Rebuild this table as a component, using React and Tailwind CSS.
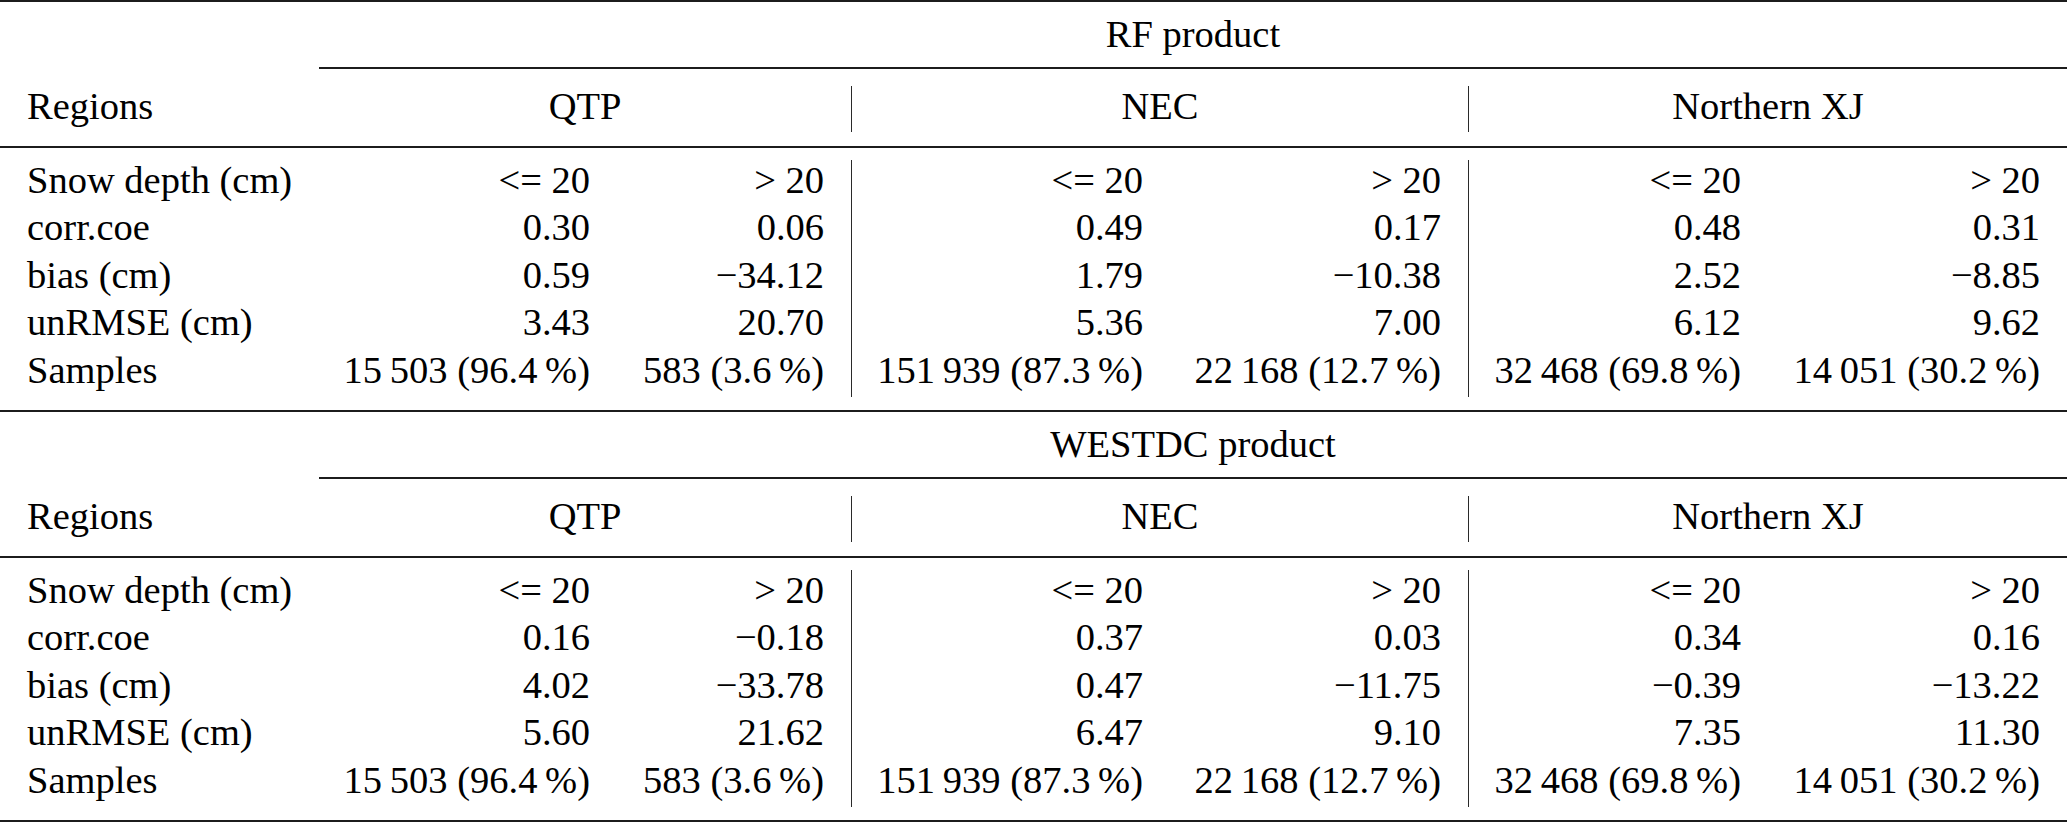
import React from "react";

const GRID = "grid grid-cols-[319px_298px_235px_318px_299px_299px_299px]";

const rfRows = [
    ["Snow depth (cm)", "<= 20", "> 20", "<= 20", "> 20", "<= 20", "> 20"],
    ["corr.coe", "0.30", "0.06", "0.49", "0.17", "0.48", "0.31"],
    ["bias (cm)", "0.59", "\u221234.12", "1.79", "\u221210.38", "2.52", "\u22128.85"],
    ["unRMSE (cm)", "3.43", "20.70", "5.36", "7.00", "6.12", "9.62"],
    [
        "Samples",
        "15\u2009503 (96.4\u2009%)",
        "583 (3.6\u2009%)",
        "151\u2009939 (87.3\u2009%)",
        "22\u2009168 (12.7\u2009%)",
        "32\u2009468 (69.8\u2009%)",
        "14\u2009051 (30.2\u2009%)",
    ],
];

const westdcRows = [
    ["Snow depth (cm)", "<= 20", "> 20", "<= 20", "> 20", "<= 20", "> 20"],
    ["corr.coe", "0.16", "\u22120.18", "0.37", "0.03", "0.34", "0.16"],
    ["bias (cm)", "4.02", "\u221233.78", "0.47", "\u221211.75", "\u22120.39", "\u221213.22"],
    ["unRMSE (cm)", "5.60", "21.62", "6.47", "9.10", "7.35", "11.30"],
    [
        "Samples",
        "15\u2009503 (96.4\u2009%)",
        "583 (3.6\u2009%)",
        "151\u2009939 (87.3\u2009%)",
        "22\u2009168 (12.7\u2009%)",
        "32\u2009468 (69.8\u2009%)",
        "14\u2009051 (30.2\u2009%)",
    ],
];

// columns 3 and 5 carry the vertical bar on their right side
const barCol = (i) => i === 2 || i === 4;

const ResultTable = ({ title, rows }) => {
    return (
        <div>
            {/* Group title */}
            <div className="pt-[12px] pb-[13px] pl-[319px] text-center leading-[40px]">{title}</div>
            <div className="ml-[319px] h-[2px] bg-[#1c1c1c]" />

            {/* Region header */}
            <div className={`${GRID} mt-[17px] mb-[14px] leading-[40px]`}>
                <div className="h-[46px] pl-[27px]">Regions</div>
                <div className="col-span-2 h-[46px] text-center border-r border-[#2a2a2a]">QTP</div>
                <div className="col-span-2 h-[46px] text-center border-r border-[#2a2a2a]">NEC</div>
                <div className="col-span-2 h-[46px] text-center">Northern XJ</div>
            </div>
            <div className="h-[2px] bg-[#1c1c1c]" />

            {/* Body */}
            <div className="pt-[12px] pb-[13px]">
                {rows.map((row) => (
                    <div key={row[0]} className={`${GRID} leading-[40px]`}>
                        {row.map((cell, i) =>
                            i === 0 ? (
                                <div key={i} className="h-[47.4px] pl-[27px] whitespace-nowrap">
                                    {cell}
                                </div>
                            ) : (
                                <div
                                    key={i}
                                    className={`h-[47.4px] text-right whitespace-nowrap pr-[27px] ${
                                        barCol(i) ? "border-r border-[#2a2a2a]" : ""
                                    }`}
                                >
                                    {cell}
                                </div>
                            )
                        )}
                    </div>
                ))}
            </div>
            <div className="h-[2px] bg-[#1c1c1c]" />
        </div>
    );
};

const App = () => {
    return (
        <div className="w-[2067px] h-[822px] overflow-hidden bg-white text-black [font-family:'Liberation_Serif','Times_New_Roman',serif] text-[38.5px]">
            <div className="h-[2px] bg-[#1c1c1c]" />
            <ResultTable title="RF product" rows={rfRows} />
            <ResultTable title="WESTDC product" rows={westdcRows} />
        </div>
    );
};

export default App;
